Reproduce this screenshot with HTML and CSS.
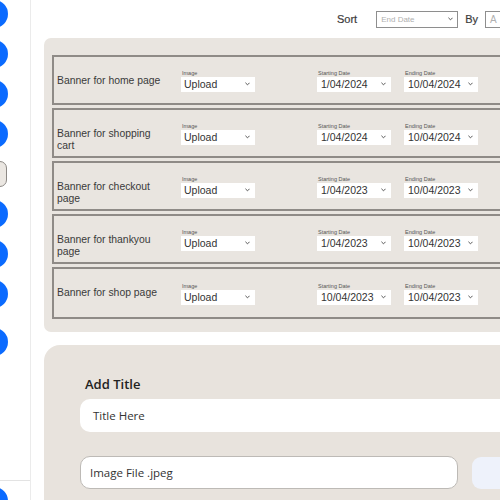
FILE: index.html
```html
<!DOCTYPE html>
<html>
<head>
<meta charset="utf-8">
<link rel="stylesheet" href="styles.css">
</head>
<body>
<div class="app">
  <aside class="sidebar">
    <div class="nav">
      <span class="dot"></span>
      <span class="dot"></span>
      <span class="dot"></span>
      <span class="dot"></span>
      <span class="tab"></span>
      <span class="dot"></span>
      <span class="dot"></span>
      <span class="dot"></span>
      <span class="dot dot-far"></span>
    </div>
    <div class="side-foot">
      <span class="dot"></span>
    </div>
  </aside>
  <main class="main">
    <div class="toolbar">
      <span class="tb-label">Sort</span>
      <div class="tb-select"><span>End Date</span><svg class="chev" viewBox="0 0 6 4"><path d="M0.5 0.5 L3 3 L5.5 0.5" fill="none" stroke="#555" stroke-width="1.2"/></svg></div>
      <span class="tb-label">By</span>
      <div class="tb-select tb-short"><span>A</span></div>
    </div>

    <section class="panel">
      <div class="row">
        <div class="row-title">Banner for home page</div>
        <div class="field f-image"><label>Image</label><div class="sel"><span>Upload</span><svg class="chev" viewBox="0 0 6 4"><path d="M0.5 0.5 L3 3 L5.5 0.5" fill="none" stroke="#555" stroke-width="1.2"/></svg></div></div>
        <div class="field f-start"><label>Starting Date</label><div class="sel"><span>1/04/2024</span><svg class="chev" viewBox="0 0 6 4"><path d="M0.5 0.5 L3 3 L5.5 0.5" fill="none" stroke="#555" stroke-width="1.2"/></svg></div></div>
        <div class="field"><label>Ending Date</label><div class="sel"><span>10/04/2024</span><svg class="chev" viewBox="0 0 6 4"><path d="M0.5 0.5 L3 3 L5.5 0.5" fill="none" stroke="#555" stroke-width="1.2"/></svg></div></div>
      </div>
      <div class="row">
        <div class="row-title">Banner for shopping cart</div>
        <div class="field f-image"><label>Image</label><div class="sel"><span>Upload</span><svg class="chev" viewBox="0 0 6 4"><path d="M0.5 0.5 L3 3 L5.5 0.5" fill="none" stroke="#555" stroke-width="1.2"/></svg></div></div>
        <div class="field f-start"><label>Starting Date</label><div class="sel"><span>1/04/2024</span><svg class="chev" viewBox="0 0 6 4"><path d="M0.5 0.5 L3 3 L5.5 0.5" fill="none" stroke="#555" stroke-width="1.2"/></svg></div></div>
        <div class="field"><label>Ending Date</label><div class="sel"><span>10/04/2024</span><svg class="chev" viewBox="0 0 6 4"><path d="M0.5 0.5 L3 3 L5.5 0.5" fill="none" stroke="#555" stroke-width="1.2"/></svg></div></div>
      </div>
      <div class="row">
        <div class="row-title">Banner for checkout page</div>
        <div class="field f-image"><label>Image</label><div class="sel"><span>Upload</span><svg class="chev" viewBox="0 0 6 4"><path d="M0.5 0.5 L3 3 L5.5 0.5" fill="none" stroke="#555" stroke-width="1.2"/></svg></div></div>
        <div class="field f-start"><label>Starting Date</label><div class="sel"><span>1/04/2023</span><svg class="chev" viewBox="0 0 6 4"><path d="M0.5 0.5 L3 3 L5.5 0.5" fill="none" stroke="#555" stroke-width="1.2"/></svg></div></div>
        <div class="field"><label>Ending Date</label><div class="sel"><span>10/04/2023</span><svg class="chev" viewBox="0 0 6 4"><path d="M0.5 0.5 L3 3 L5.5 0.5" fill="none" stroke="#555" stroke-width="1.2"/></svg></div></div>
      </div>
      <div class="row">
        <div class="row-title">Banner for thankyou page</div>
        <div class="field f-image"><label>Image</label><div class="sel"><span>Upload</span><svg class="chev" viewBox="0 0 6 4"><path d="M0.5 0.5 L3 3 L5.5 0.5" fill="none" stroke="#555" stroke-width="1.2"/></svg></div></div>
        <div class="field f-start"><label>Starting Date</label><div class="sel"><span>1/04/2023</span><svg class="chev" viewBox="0 0 6 4"><path d="M0.5 0.5 L3 3 L5.5 0.5" fill="none" stroke="#555" stroke-width="1.2"/></svg></div></div>
        <div class="field"><label>Ending Date</label><div class="sel"><span>10/04/2023</span><svg class="chev" viewBox="0 0 6 4"><path d="M0.5 0.5 L3 3 L5.5 0.5" fill="none" stroke="#555" stroke-width="1.2"/></svg></div></div>
      </div>
      <div class="row row-last">
        <div class="row-title">Banner for shop page</div>
        <div class="field f-image"><label>Image</label><div class="sel"><span>Upload</span><svg class="chev" viewBox="0 0 6 4"><path d="M0.5 0.5 L3 3 L5.5 0.5" fill="none" stroke="#555" stroke-width="1.2"/></svg></div></div>
        <div class="field f-start"><label>Starting Date</label><div class="sel"><span>10/04/2023</span><svg class="chev" viewBox="0 0 6 4"><path d="M0.5 0.5 L3 3 L5.5 0.5" fill="none" stroke="#555" stroke-width="1.2"/></svg></div></div>
        <div class="field"><label>Ending Date</label><div class="sel"><span>10/04/2023</span><svg class="chev" viewBox="0 0 6 4"><path d="M0.5 0.5 L3 3 L5.5 0.5" fill="none" stroke="#555" stroke-width="1.2"/></svg></div></div>
      </div>
    </section>

    <section class="panel2">
      <h2 class="p2-title">Add Title</h2>
      <div class="input input-title">Title Here</div>
      <div class="file-row">
        <div class="input input-file">Image File .jpeg</div>
        <div class="file-btn"></div>
      </div>
    </section>
  </main>
</div>
</body>
</html>
```

FILE: styles.css
```css
* { box-sizing: border-box; }
html, body { margin: 0; padding: 0; }
body {
  width: 500px;
  height: 500px;
  overflow: hidden;
  background: #ffffff;
  font-family: "Liberation Sans", Arial, sans-serif;
  color: #333;
}
.app {
  display: flex;
  width: 620px;
  height: 500px;
}
.sidebar {
  width: 31px;
  flex: none;
  border-right: 1px solid #ebebeb;
  display: flex;
  flex-direction: column;
  justify-content: space-between;
  overflow: hidden;
}
.nav {
  display: flex;
  flex-direction: column;
  gap: 12px;
}
.dot {
  display: block;
  width: 28px;
  height: 28px;
  border-radius: 50%;
  background: #0b6bff;
  margin-left: -20px;
}
.dot-far { margin-top: 8px; }
.tab {
  display: block;
  width: 28px;
  height: 26px;
  margin: 1px 0 1px -21px;
  border-radius: 7px;
  background: #ebe7e2;
  border: 1px solid #8d8985;
}
.side-foot {
  border-top: 1px solid #e3e3e3;
  height: 20px;
  padding-top: 6px;
}
.main {
  flex: 1;
  display: flex;
  flex-direction: column;
  min-width: 0;
}
.toolbar {
  height: 38px;
  display: flex;
  align-items: center;
  padding-left: 306px;
}
.tb-label {
  font-size: 11px;
  color: #3c3c3c;
  -webkit-text-stroke: 0.2px #3c3c3c;
}
.tb-label:first-child { margin-right: 19px; }
.tb-select {
  width: 82px;
  height: 17px;
  border: 1px solid #8e8e8e;
  background: #fff;
  display: flex;
  align-items: center;
  justify-content: space-between;
  padding: 0 4px;
  font-size: 8px;
  color: #b0b0b0;
  margin-right: 7px;
}
.tb-short {
  width: 40px;
  margin-left: 7px;
  font-size: 10px;
}
.chev { width: 5px; height: 4px; display: block; }

.panel {
  margin-left: 13px;
  background: #e9e5e0;
  border-radius: 7px 0 0 7px;
  padding: 17px 0 13px 8px;
  display: flex;
  flex-direction: column;
  gap: 3px;
}
.row {
  height: 50px;
  border: 2px solid #8f8b87;
  border-right: none;
  display: flex;
  align-items: center;
  padding-left: 3px;
}
.row-last { height: 52px; }
.row-title {
  width: 124px;
  flex: none;
  align-self: flex-start;
  margin-top: 18px;
  padding-right: 14px;
  font-size: 10.4px;
  line-height: 12px;
  color: #3a3a3a;
}
.field {
  display: flex;
  flex-direction: column;
  flex: none;
}
.field label {
  font-size: 5.5px;
  line-height: 8px;
  color: #555;
  padding-left: 1px;
}
.f-image { margin-right: 62px; }
.f-start { margin-right: 13px; }
.sel {
  width: 74px;
  height: 15px;
  background: #fff;
  display: flex;
  align-items: center;
  justify-content: space-between;
  padding: 0 5px 0 3px;
  font-size: 10.5px;
  color: #333;
}
.f-start .sel span, .field:last-child .sel span { padding-left: 1px; }

.panel2 {
  margin-left: 13px;
  margin-top: 13px;
  background: #e8e3dd;
  border-radius: 16px 0 0 0;
  padding: 30px 0 0 36px;
  flex: 1;
  font-family: "Open Sans", "Noto Sans", sans-serif;
}
.p2-title {
  margin: 0 0 6px 5px;
  font-size: 13px;
  font-weight: 600;
  color: #222;
  line-height: 18px;
}
.input {
  height: 33px;
  background: #fff;
  border-radius: 10px;
  display: flex;
  align-items: center;
  font-size: 11.5px;
  color: #333;
}
.input-title {
  padding-left: 13px;
  margin-bottom: 24px;
}
.file-row {
  display: flex;
  gap: 14px;
}
.input-file {
  width: 378px;
  border: 1px solid #bdbab6;
  padding-left: 9px;
}
.file-btn {
  width: 80px;
  height: 32px;
  margin-top: 1px;
  background: #eef2fb;
  border-radius: 9px;
}
```
